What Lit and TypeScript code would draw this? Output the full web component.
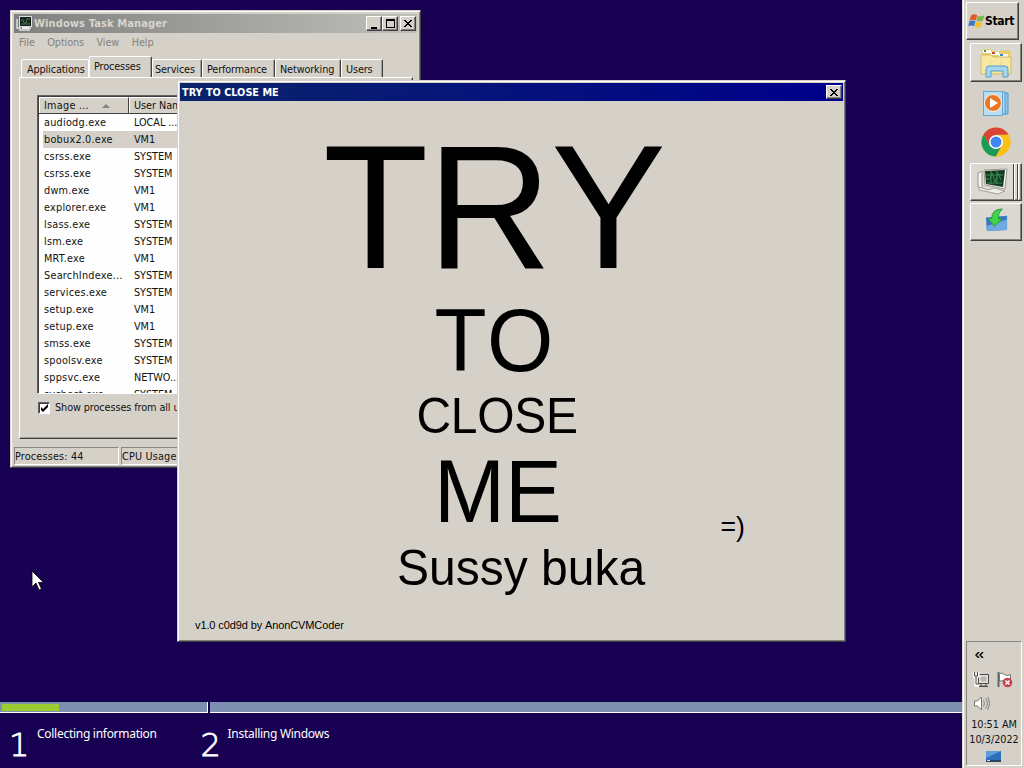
import { LitElement, html, svg, css } from "lit";
import { customElement } from "lit/decorators.js";

const PROCESSES: [string, string][] = [
  ["audiodg.exe", "LOCAL ..."],
  ["bobux2.0.exe", "VM1"],
  ["csrss.exe", "SYSTEM"],
  ["csrss.exe", "SYSTEM"],
  ["dwm.exe", "VM1"],
  ["explorer.exe", "VM1"],
  ["lsass.exe", "SYSTEM"],
  ["lsm.exe", "SYSTEM"],
  ["MRT.exe", "VM1"],
  ["SearchIndexe...", "SYSTEM"],
  ["services.exe", "SYSTEM"],
  ["setup.exe", "VM1"],
  ["setup.exe", "VM1"],
  ["smss.exe", "SYSTEM"],
  ["spoolsv.exe", "SYSTEM"],
  ["sppsvc.exe", "NETWO..."],
  ["svchost.exe", "SYSTEM"],
];

const closeGlyph = svg`<path d="M0 0h2v1h1v1h2v-1h1v-1h2v1h-1v1h-1v1h-1v1h1v1h1v1h1v1h-2v-1h-1v-1h-2v1h-1v1h-2v-1h1v-1h1v-1h1v-1h-1v-1h-1v-1h-1z" fill="#000"/>`;

@customElement("task-manager")
class TaskManager extends LitElement {
  static styles = css`
    :host { display: flex; flex-direction: column; box-sizing: border-box; width: 411px; height: 458px;
      padding: 2px; background: #d5d1c9; color: #111;
      border: 1px solid; border-color: #d5d1c9 #404040 #404040 #d5d1c9;
      box-shadow: inset 1px 1px #fff, inset -1px -1px #808080; }
    .title { display: flex; align-items: center; height: 19px; margin: 1px 1px 0; padding: 0 1px 0 2px; box-sizing: border-box;
      background: linear-gradient(90deg, #808080, #bfbeba); color: #d8d4cc; font-weight: bold; font-size: 11px; letter-spacing: 0.12px; }
    .title span { flex: 1; margin-left: 1px; padding-top: 1px; }
    .btn { box-sizing: border-box; width: 16px; height: 15px; background: #d5d1c9; border: 1px solid;
      border-color: #fff #404040 #404040 #fff; box-shadow: inset -1px -1px #808080; display: flex; }
    .btn svg { margin: 2px 0 0 2px; }
    .btn.x { margin-left: 2px; }
    .btn.x svg { margin: 3px 0 0 3px; }
    .menu { display: flex; height: 20px; align-items: center; padding-left: 6px; gap: 12.5px; color: #85827c; }
    .tabs { display: flex; align-items: flex-end; height: 22px; margin: 2px 7px 0 8px; letter-spacing: -0.14px; }
    .tab { box-sizing: border-box; height: 18px; border: 1px solid; border-color: #fff #404040 transparent #fff;
      border-bottom: 0; border-radius: 2px 2px 0 0; display: flex; align-items: center; box-shadow: inset -1px 0 #a09d96; white-space: nowrap; padding-top: 3px; }
    .tab.on { height: 21px; padding: 2px 0 2px 4px; }
    .t0 { width: 68px; border-right-color: #fff; box-shadow: none; padding-left: 5px; }
    .t1 { width: 63px; } .t2 { width: 50px; padding-left: 2px; } .t3 { width: 73px; padding-left: 4px; }
    .t4 { width: 66px; padding-left: 4px; } .t5 { width: 42px; padding-left: 4px; }
    .panel { height: 363px; margin: 0 5px 0 6px; box-sizing: border-box; border: 1px solid; border-color: #fff #404040 #404040 #fff;
      box-shadow: inset -1px -1px #a09d96; padding: 17px 17px 0; }
    .list { box-sizing: border-box; height: 299px; overflow: hidden; background: #fefefe; border: 1px solid; border-color: #606060 #fff #fff #606060;
      box-shadow: inset 1px 1px #404040; padding: 1px 0 0 1px; }
    .row { display: grid; grid-template-columns: 90px 1fr; height: 17px; align-items: center; }
    .row span { padding: 1px 0 0 5px; letter-spacing: 0.24px; }
    .row .u { letter-spacing: -0.05px; }
    .row.sel { background: linear-gradient(#d5d1c9, #d5d1c9) 4px 0 no-repeat; }
    .row.head { height: 17px; background: #d5d1c9; border-bottom: 1px solid #404040; box-sizing: border-box; align-items: stretch; }
    .head span { border-left: 1px solid #fff; border-top: 1px solid #fff; padding-left: 4px; border-right: 1px solid #404040; display: flex; align-items: center; gap: 13px; }
    .check { display: flex; align-items: center; margin-top: 7px; gap: 5px; height: 14px; white-space: nowrap; padding-left: 1px; line-height: 16px; }
    .box { box-sizing: border-box; width: 12px; height: 12px; background: #fff; border: 1px solid; border-color: #606060 #fff #fff #606060; box-shadow: inset 1px 1px #404040; display: flex; }
    .status { display: grid; grid-template-columns: 105px 1fr; gap: 2px; height: 18px; margin: 8px 1px 0; }
    .status span { border: 1px solid; border-color: #8a8780 #fff #fff #8a8780; display: flex; align-items: center; letter-spacing: 0.16px; padding-top: 1px; box-sizing: border-box; }
  `;
  render() {
    return html`
      <div class="title">
        <svg width="17" height="16" viewBox="0 0 17 16"><path d="M1 4v9h3v2h9v-2h2" fill="none" stroke="#ddd" stroke-width="1.5"/><rect x="3.5" y="1.5" width="12" height="10" fill="#18251c" stroke="#ddd"/><path d="M5 5h2l1 3h2l1-4h3M5 9h9" stroke="#4a7a50" fill="none"/><path d="M6 13h7" stroke="#eee" stroke-width="2"/></svg>
        <span>Windows Task Manager</span>
        <div class="btn"><svg width="11" height="10"><path d="M2 8h6v2h-6z"/></svg></div>
        <div class="btn"><svg width="11" height="10"><path fill-rule="evenodd" d="M1 0h9v9h-9zM2 2v6h7v-6z"/></svg></div>
        <div class="btn x"><svg width="8" height="7">${closeGlyph}</svg></div>
      </div>
      <div class="menu"><span>File</span><span>Options</span><span>View</span><span>Help</span></div>
      <div class="tabs">
        ${["Applications", "Processes", "Services", "Performance", "Networking", "Users"].map(
          (t, i) => html`<div class="tab t${i} ${i === 1 ? "on" : ""}">${t}</div>`)}
      </div>
      <div class="panel">
        <div class="list">
          <div class="row head"><span>Image ... <svg width="8" height="4"><path d="M4 0l4 4h-8z" fill="#85827c"/></svg></span><span class="u">User Name</span></div>
          ${PROCESSES.map(([n, u], i) => html`<div class="row ${i === 1 ? "sel" : ""}"><span>${n}</span><span class="u">${u}</span></div>`)}
        </div>
        <div class="check"><div class="box"><svg width="10" height="10"><path d="M2 4v3l2 2 5-5v-3l-5 5z"/></svg></div>Show processes from all users</div>
      </div>
      <div class="status"><span>Processes: 44</span><span>CPU Usage: 100%</span></div>
    `;
  }
}

@customElement("prank-window")
class PrankWindow extends LitElement {
  static styles = css`
    :host { display: block; box-sizing: border-box; width: 669px; height: 562px; padding: 2px; background: #d5d1c9;
      border: 1px solid; border-color: #d5d1c9 #404040 #404040 #d5d1c9; box-shadow: inset 1px 1px #fff, inset -1px -1px #808080; }
    .title { display: flex; align-items: center; justify-content: space-between; height: 18px; box-sizing: border-box;
      background: linear-gradient(90deg, #0a246a, #00008c); color: #fff; font-weight: bold; padding: 0 1px 0 2px; }
    .title span { letter-spacing: 0; padding-top: 1px; }
    .btn { box-sizing: border-box; width: 16px; height: 14px; background: #d5d1c9; border: 1px solid; border-color: #fff #404040 #404040 #fff; box-shadow: inset -1px -1px #808080; display: flex; }
    .btn svg { margin: 3px 0 0 3px; }
    .body { font-family: "Liberation Sans", Arial, sans-serif; color: #000; display: flex; flex-direction: column; letter-spacing: 0; font-kerning: none; }
    /* Capitals are stretched slightly, keeping the baseline in place. */
    .line { white-space: nowrap; display: block; transform: scaleY(1.035); transform-origin: 0 calc(50% + 0.3465em); }
    .try { font-size: 172.5px; line-height: 200px; height: 200px; padding-left: 143px; margin-top: 8px; letter-spacing: -1px; transform: scaleY(1.025); }
    .to { font-size: 85.33px; line-height: 80px; padding-left: 254.5px; margin-top: -7px; letter-spacing: 0.5px; }
    .close { font-size: 48px; line-height: 60px; padding-left: 236.5px; margin-top: 5px; letter-spacing: -0.3px; }
    .me { font-size: 85.33px; line-height: 90px; padding-left: 254px; margin-top: 1px; }
    .row { display: flex; margin-top: 1px; }
    .sus { font-size: 48px; line-height: 60px; padding-left: 217px; width: 249px; }
    .smile { font-size: 26.67px; line-height: 30px; padding-left: 74.5px; margin-top: -27px; height: 30px; }
    .ver { font-size: 11px; line-height: 14px; padding-left: 15px; margin-top: 19px; letter-spacing: -0.11px; }
  `;
  render() {
    return html`
      <div class="title"><span>TRY TO CLOSE ME</span><div class="btn"><svg width="8" height="7">${closeGlyph}</svg></div></div>
      <div class="body">
        <span class="line try">TRY</span>
        <span class="line to">TO</span>
        <span class="line close">CLOSE</span>
        <span class="line me">ME</span>
        <div class="row"><span class="line sus">Sussy buka</span><span class="line smile">=)</span></div>
        <span class="line ver">v1.0 c0d9d by AnonCVMCoder</span>
      </div>`;
  }
}

@customElement("task-bar")
class TaskBar extends LitElement {
  static styles = css`
    :host { display: flex; flex-direction: column; box-sizing: border-box; width: 62px; height: 768px; background: #d5d1c9;
      border-left: 1px solid #dedbd5; box-shadow: inset 1px 0 #fff; padding: 2px 2px 2px 3px; color: #111; }
    .start { box-sizing: border-box; width: 53px; height: 38px; border: 1px solid; border-color: #fff #404040 #404040 #fff;
      box-shadow: inset -1px -1px #85827c; display: flex; align-items: center; gap: 0; padding-left: 1px; font-weight: bold; font-size: 12px; letter-spacing: -0.35px; color: #000; }
    .item { box-sizing: border-box; width: 52px; height: 39px; margin-left: 4px; display: flex; align-items: center; justify-content: center; }
    .up { border: 1px solid; border-color: #fff #404040 #404040 #fff; box-shadow: inset -1px -1px #85827c; background: #dcd9d3; }
    .a { margin-top: 3px; } .b { margin-top: 2px; } .c { height: 37px; }
    .d { height: 38px; margin-top: 3px; } .e { height: 38px; margin-top: 2px; }
    .e svg { margin-top: -4px; }
    .item.stack { display: grid; grid-template-columns: 43px 4px 3px; justify-content: start; }
    .stack i { border-right: 1px solid #45433f; border-left: 1px solid #fff; height: 36px; }
    .stack i + i { border-right: 0; }
    .face { border-right: 1px solid #404040; display: flex; height: 36px; align-items: center; justify-content: center; padding-left: 1px; }
    .tray { margin-top: auto; box-sizing: border-box; width: 56px; height: 125px; border: 1px solid; border-color: #8a8780 #fff #fff #8a8780;
      display: flex; flex-direction: column; padding: 0 2px; }
    .chev { height: 25px; padding: 10px 0 0 6px; box-sizing: border-box; }
    .icons { display: flex; gap: 6px; padding-left: 4px; height: 24px; align-items: center; }
    .clock { text-align: center; line-height: 15px; white-space: nowrap; margin: 1.6px -4px 0; letter-spacing: -0.05px; }
    .show { margin: 3px 0 0 16px; }
    svg { display: block; flex: none; }
  `;
  render() {
    return html`
      <div class="start">
        <svg width="17" height="18" viewBox="0 1 16.500 15"><path d="M3 3q3-2 6 0l-1.500 5q-3-1.500-6 0z" fill="#e2592b"/><path d="M9.500 3.300q3 1.500 6.500-.3l-1.500 5q-3 1.500-6.300.3z" fill="#7ab648"/><path d="M1.300 8.700q3-1.500 6 0l-1.500 5q-3-1.500-5.500 0z" fill="#3b77c9"/><path d="M8 9.200q3 1.500 6 0l-1.500 5q-3 1.500-6 0z" fill="#f5c02c"/></svg>
        <span>Start</span>
      </div>
      <div class="item up a">
        <svg width="34" height="32" viewBox="0 0 34 32"><path d="M3 4q0-2 2-2h7l2 2h8q0-1 2-1h6q2 0 2 3v21h-29z" fill="#e4cf78"/><path d="M4 3h8v3h-8z" fill="#fff"/><path d="M5 3h2v2h-2z" fill="#2c9a4a"/><path d="M12 5h8v3h-8z" fill="#fff"/><path d="M13 5h3v2h-3z" fill="#c8462e"/><path d="M20 7h9v3h-9z" fill="#fff"/><path d="M21 7h3v2h-3z" fill="#3a8ccc"/><path d="M2 8h10l2 2h18v17h-30z" fill="#f7e8a4" stroke="#d5bb63"/><path d="M12 11v15M22 11v15" stroke="#eed98b"/><path d="M7 30v-8q0-3 3-3h16q3 0 3 3v8h-5v-6h-12v6z" fill="#a5d5ef" stroke="#5a9dc8"/></svg>
      </div>
      <div class="item b">
        <svg width="28" height="27" viewBox="0 0 28 27"><path d="M9 3h17v21h-17z" fill="#8fc5e6" stroke="#4d9acb"/><path d="M6 2h17v22h-17z" fill="#b9def1" stroke="#4d9acb"/><path d="M1.500 1.500h19v24h-19z" fill="#b9def1" stroke="#63a7d0"/><circle cx="11" cy="13" r="8.500" fill="#ec7623" stroke="#fff0df"/><path d="M8 8l8 5-8 5z" fill="#fff"/></svg>
      </div>
      <div class="item c">
        <svg width="30" height="30" viewBox="-15 -15 30 30"><circle r="14.500" fill="#fbc116"/><path d="M-12.560-7.250A14.500 14.500 0 0 1 12.560-7.250L0-6.800-5.900 3.400z" fill="#da4437"/><path d="M-12.560-7.250A14.500 14.500 0 0 0 0 14.500L5.900 3.400 0 6.800-5.900 3.400z" fill="#1a9c57"/><path d="M12.560-7.250H0L5.900 3.400 0 14.500A14.500 14.500 0 0 0 12.560-7.250z" fill="#fbc116"/><circle r="7" fill="#fff"/><circle r="5.500" fill="#4285f4"/></svg>
      </div>
      <div class="item up d stack">
        <div class="face"><svg width="34" height="30" viewBox="0 0 34 30"><path d="M2 6l4-2v18l-4-2z" fill="#f4f4f0" stroke="#97948c"/><path d="M3 20l9 3 6-2 11 3-7 3-19-4z" fill="#eeeeea" stroke="#a5a29b"/><path d="M8 3l23-1-2 20-20-4z" fill="#f3f3ef" stroke="#9c9991"/><path d="M9 4l20-1-2 17-17-3z" fill="#123c20"/><path d="M10 12h4l2-6 3 9 3-9 3 7M10 8h17M11 16h15M15 4v13M21 4v13" fill="none" stroke="#3d8652"/></svg></div><i></i><i></i>
      </div>
      <div class="item up e">
        <svg width="25" height="25" viewBox="0 0 26 26"><path d="M2 10l22-2v15l-21 1z" fill="#3b78c4"/><path d="M2 19l22-7v11l-21 1z" fill="#6fa9e0"/><path d="M19 1q-11 0-11 10h-4l7 8 8-8h-4q-1-6 4-10z" fill="#42d34a" stroke="#1e9b36"/></svg>
      </div>
      <div class="tray">
        <div class="chev"><svg width="9" height="6" viewBox="0 0 9 6"><path d="M4 0L1 3l3 3M8 0L5 3l3 3" fill="none" stroke="#000" stroke-width="1.500"/></svg></div>
        <div class="icons">
          <svg width="17" height="17" viewBox="0 0 17 17"><path d="M5.500 3.500h10v9h-10zM8 13v2h5v-2M6 15.500h9" fill="#e4e2de" stroke="#4b4945"/><path d="M7.500 5.500h6v5h-6z" fill="#b9b6af"/><path d="M1 1v4h4v-4M3 5v9h3" fill="none" stroke="#fff" stroke-width="3"/><path d="M1.500 1v4h3v-4M3 5v8h3" fill="none" stroke="#4b4945"/></svg>
          <svg width="17" height="17" viewBox="0 0 17 17"><path d="M2.500 1v15" stroke="#666" stroke-width="2"/><path d="M3.500 2.500q3-1 5 1t6 0v7q-4 2-6 0t-5 0z" fill="#fff" stroke="#777"/><circle cx="11.500" cy="11.500" r="4.800" fill="#c94249"/><path d="M9.500 9.500l4 4m0-4l-4 4" stroke="#fff" stroke-width="1.500"/></svg>
        </div>
        <div class="icons"><svg width="17" height="17" viewBox="0 0 17 17"><path d="M1.500 6h3l4-4v13l-4-4h-3z" fill="#fff" stroke="#777"/><path d="M10.500 5.500q2 3 0 6M12.500 3.500q4 5 0 10M14.500 2q4 6 0 13" fill="none" stroke="#85827c"/></svg></div>
        <div class="clock">10:51 AM<br />10/3/2022</div>
        <div class="show"><svg width="17" height="13"><path d="M1 1h15v9h-15z" fill="#2d6fb8"/><path d="M1 1h15l-15 7z" fill="#5d9fdb"/><path d="M1 10h15v2h-15z" fill="#2b4466"/><path d="M2 10h3v1h-3z" fill="#cde"/></svg></div>
      </div>`;
  }
}

@customElement("app-root")
class AppRoot extends LitElement {
  static styles = css`
    :host { display: grid; grid-template-columns: 962px 62px; width: 1024px; height: 768px; overflow: hidden;
      font-family: "DejaVu Sans Condensed", "DejaVu Sans", sans-serif; font-stretch: condensed; font-size: 10.8px; line-height: 14px; letter-spacing: -0.1px; }
    .desk { position: relative; background: #180052; display: flex; flex-direction: column; justify-content: flex-end; overflow: hidden; }
    .tm { position: absolute; left: 10px; top: 10px; }
    .pw { position: absolute; left: 177px; top: 80px; }
    .cursor { position: absolute; left: 31px; top: 570px; }
    .bars { display: grid; grid-template-columns: 208px 1fr; gap: 2px; height: 11px; }
    .bar { background: #7e90b0; border-bottom: 1px solid #fff; box-sizing: border-box; padding: 2px 0 1px 2px; }
    .bar.one { border-right: 1px solid #fff; }
    .fill { background: #9acd32; width: 57px; height: 7px; }
    .steps { height: 55px; display: flex; color: #fff; font-family: "Noto Sans", "Open Sans", sans-serif; font-stretch: normal; font-size: 12px; letter-spacing: -0.28px; }
    .step { display: flex; width: 190.500px; padding-left: 9px; box-sizing: border-box; }
    .step b { font: 200 32px/40px "DejaVu Sans Light", "DejaVu Sans", sans-serif; font-stretch: normal; -webkit-text-stroke: 0.8px #fff; width: 20px; margin: 12px 8px 0 0; }
    .step + .step b { margin-left: 1px; margin-right: 7px; }
    .step span { margin-top: 13px; line-height: 16px; white-space: nowrap; }
  `;
  render() {
    return html`
      <div class="desk">
        <task-manager class="tm"></task-manager>
        <prank-window class="pw"></prank-window>
        <div class="bars"><div class="bar one"><div class="fill"></div></div><div class="bar"></div></div>
        <div class="steps">
          <div class="step"><b>1</b><span>Collecting information</span></div>
          <div class="step"><b>2</b><span>Installing Windows</span></div>
        </div>
        <svg class="cursor" width="14" height="22"><path d="M1 1v16l4-4 3 7 2.500-1-3-6.500h5z" fill="#fff" stroke="#000" stroke-width=".8"/></svg>
      </div>
      <task-bar></task-bar>`;
  }
}
